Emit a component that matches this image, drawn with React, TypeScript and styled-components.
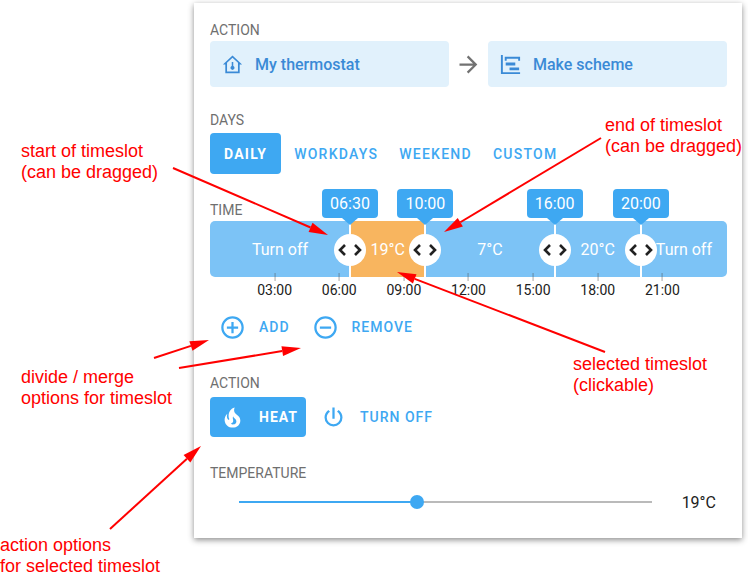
import React, { useState } from "react";
import styled, { createGlobalStyle, css } from "styled-components";

const GlobalStyle = createGlobalStyle`
  *, *::before, *::after { box-sizing: border-box; }
  body { margin: 0; background: #fff; font-family: Roboto, "Open Sans", sans-serif; color: #212121; }
  button { font-family: inherit; border: 0; cursor: pointer; background: none; }
`;

const BLUE = "#3ea8f2";

const Page = styled.main`
  position: relative;
  padding: 3px 6px 34px 194px;
`;

const Card = styled.section`
  padding: 17px 15px 16px 16px;
  background: #fff;
  box-shadow: 0 2px 6px rgba(0, 0, 0, 0.45);
`;

const Section = styled.section<{ $before?: number }>`
  margin-top: ${(p) => p.$before ?? 26}px;
`;

const Label = styled.h2<{ $after?: number }>`
  margin: 0 0 ${(p) => p.$after ?? 1}px;
  font-size: 14px;
  font-weight: 400;
  line-height: 20px;
  color: #6f6f6f;
`;

const ActionRow = styled.div`
  display: flex;
  align-items: center;
`;

const ActionBox = styled.button`
  flex: 1;
  display: flex;
  align-items: center;
  gap: 11px;
  height: 46px;
  padding: 0 11px;
  border-radius: 4px;
  background: #e1f1fc;
  color: #3a8ad6;
  font-size: 16px;
  font-weight: 500;
`;

const ArrowCell = styled.div`
  display: flex;
  justify-content: center;
  width: 39px;
  color: #727272;
`;

const ButtonRow = styled.div`
  display: flex;
  gap: 5px;
`;

const activeStyle = css`
  background: ${BLUE};
  color: #fff;
  font-weight: 700;
`;

const DayButton = styled.button<{ $active: boolean }>`
  height: 41px;
  padding: 0 ${(p) => (p.$active ? 14 : 8)}px;
  border-radius: 4px;
  font-size: 14px;
  font-weight: 500;
  letter-spacing: 1.25px;
  color: ${BLUE};
  ${(p) => p.$active && activeStyle}
`;

const IconButton = styled.button<{ $active?: boolean }>`
  display: flex;
  align-items: center;
  gap: 13px;
  height: 40px;
  padding: 0 8px 0 9px;
  border-radius: 4px;
  font-size: 14px;
  font-weight: 500;
  letter-spacing: 1px;
  color: ${BLUE};
  ${(p) => p.$active && activeStyle}
`;

const Timeline = styled.div`
  position: relative;
  padding-bottom: 30px;
`;

const SlotBar = styled.div`
  display: flex;
  height: 56px;
  border-radius: 5px;
  overflow: hidden;
`;

const Slot = styled.button<{ $hours: number; $selected: boolean }>`
  flex: ${(p) => p.$hours} 1 0;
  min-width: 0;
  padding: 0;
  background: ${(p) => (p.$selected ? "#f8b55f" : "#7cc3f6")};
  color: #fff;
  font-size: 16px;
  white-space: nowrap;
`;

const Hour = styled.span<{ $at: number }>`
  position: absolute;
  top: 52px;
  left: ${(p) => (p.$at / 24) * 100}%;
  display: flex;
  flex-direction: column;
  align-items: center;
  transform: translateX(-50%);
  font-size: 14px;
  line-height: 18px;

  &::before {
    content: "";
    width: 1px;
    height: 8px;
    background: rgba(80, 80, 80, 0.5);
  }
`;

const Marker = styled.div<{ $at: number }>`
  position: absolute;
  top: -32px;
  left: ${(p) => (p.$at / 24) * 100}%;
  display: flex;
  flex-direction: column;
  align-items: center;
  transform: translateX(-50%);

  &::before {
    content: "";
    position: absolute;
    top: 32px;
    width: 2px;
    height: 56px;
    background: #fff;
  }
`;

const TimeTip = styled.span`
  position: relative;
  width: 56px;
  border-radius: 4px;
  background: ${BLUE};
  color: #fff;
  font-size: 16px;
  line-height: 29px;
  text-align: center;

  &::after {
    content: "";
    position: absolute;
    top: 29px;
    left: 20px;
    border: 8px solid transparent;
    border-top: 7px solid ${BLUE};
    border-bottom: 0;
  }
`;

const Handle = styled.button`
  position: relative;
  width: 32px;
  height: 32px;
  margin-top: 16px;
  padding: 0;
  border-radius: 50%;
  background: #fff;
  color: #212121;

  svg { display: block; }
`;

const SliderRow = styled.div`
  display: flex;
  align-items: center;
  gap: 30px;
  padding: 0 11px 0 29px;
  height: 38px;
  margin-bottom: 1px;
  font-size: 16px;
`;

const Slider = styled.input<{ $fill: number }>`
  appearance: none;
  flex: 1;
  min-width: 0;
  height: 20px;
  margin: 0;
  background: linear-gradient(${BLUE}, ${BLUE}) 0 50% / ${(p) => p.$fill}% 2px no-repeat,
    linear-gradient(#bababa, #bababa) 0 50% / 100% 2px no-repeat;

  &::-webkit-slider-thumb {
    appearance: none;
    width: 14px;
    height: 14px;
    border-radius: 50%;
    background: ${BLUE};
  }
`;

const Note = styled.p<{ $x: number; $y: number }>`
  position: absolute;
  left: ${(p) => p.$x}px;
  top: ${(p) => p.$y}px;
  margin: 0;
  font: 18px/21px "Liberation Sans", Arial, sans-serif;
  color: #f00;
  white-space: pre;
  pointer-events: none;
`;

const Arrows = styled.svg`
  position: absolute;
  top: 0;
  left: 0;
  pointer-events: none;
`;

const icons = {
  house:
    "M12 2.500L2 12H4.500V21H19.500V12H22L12 2.500M6.300 19.300V10.300L12 4.900L17.700 10.300V19.300H6.300M11.200 9.500H12.800V13.600A2.100 2.100 0 1 1 11.200 13.600Z",
  gantt: "M2,2H4V20H22V22H2V2M7,10H17V13H7V10M11,15H21V18H11V15M6,4H22V8H20V6H8V8H6V4Z",
  arrow: "M4,11V13H16L10.5,18.5L11.92,19.92L19.84,12L11.92,4.08L10.5,5.5L16,11H4Z",
  plus: "M12,20C7.59,20 4,16.41 4,12C4,7.59 7.59,4 12,4C16.41,4 20,7.59 20,12C20,16.41 16.41,20 12,20M12,2A10,10 0 0,0 2,12A10,10 0 0,0 12,22A10,10 0 0,0 22,12A10,10 0 0,0 12,2M13,7H11V11H7V13H11V17H13V13H17V11H13V7Z",
  minus:
    "M12,20C7.59,20 4,16.41 4,12C4,7.59 7.59,4 12,4C16.41,4 20,7.59 20,12C20,16.41 16.41,20 12,20M12,2A10,10 0 0,0 2,12A10,10 0 0,0 12,22A10,10 0 0,0 22,12A10,10 0 0,0 12,2M7,13H17V11H7V13Z",
  power:
    "M16.56,5.44L15.11,6.89C16.84,7.94 18,9.83 18,12A6,6 0 0,1 12,18A6,6 0 0,1 6,12C6,9.83 7.16,7.94 8.88,6.88L7.44,5.44C5.36,6.88 4,9.28 4,12A8,8 0 0,0 12,20A8,8 0 0,0 20,12C20,9.28 18.64,6.88 16.56,5.44M13,3H11V13H13Z",
  fire: "M17.66 11.2C17.43 10.9 17.15 10.64 16.89 10.38C16.22 9.78 15.46 9.35 14.82 8.72C13.33 7.26 13 4.85 13.95 3C13 3.23 12.17 3.75 11.46 4.32C8.87 6.4 7.85 10.07 9.07 13.22C9.11 13.32 9.15 13.42 9.15 13.55C9.15 13.77 9 13.97 8.8 14.05C8.57 14.15 8.33 14.09 8.14 13.93C8.08 13.88 8.04 13.83 8 13.76C6.87 12.33 6.69 10.28 7.45 8.64C5.78 10 4.87 12.3 5 14.47C5.06 14.97 5.12 15.47 5.29 15.97C5.43 16.57 5.7 17.17 6 17.7C7.08 19.43 8.95 20.67 10.96 20.92C13.1 21.19 15.39 20.8 17.03 19.32C18.86 17.66 19.5 15 18.56 12.72L18.43 12.46C18.22 12 17.66 11.2 17.66 11.2M14.5 17.5C14.22 17.74 13.76 18 13.4 18.1C12.28 18.5 11.16 17.94 10.5 17.28C11.69 17 12.4 16.12 12.61 15.23C12.78 14.43 12.46 13.77 12.33 13C12.21 12.26 12.23 11.63 12.5 10.94C12.69 11.32 12.89 11.7 13.13 12C13.9 13 15.11 13.44 15.37 14.8C15.41 14.94 15.43 15.08 15.43 15.23C15.46 16.05 15.1 16.95 14.5 17.5Z",
};

function Icon({ name, size = 27 }: { name: keyof typeof icons; size?: number }) {
  return (
    <svg width={size} height={size} viewBox="0 0 24 24" fill="currentColor" aria-hidden="true">
      <path d={icons[name]} fillRule={name === "house" ? "evenodd" : "nonzero"} />
    </svg>
  );
}

const days = ["DAILY", "WORKDAYS", "WEEKEND", "CUSTOM"];

const slots = [
  { hours: 6.5, text: "Turn off" },
  { hours: 3.5, text: "19°C" },
  { hours: 6, text: "7°C" },
  { hours: 4, text: "20°C" },
  { hours: 4, text: "Turn off" },
];

const markers = [
  { at: 6.5, text: "06:30" },
  { at: 10, text: "10:00" },
  { at: 16, text: "16:00" },
  { at: 20, text: "20:00" },
];

const hours = [3, 6, 9, 12, 15, 18, 21];

const notes = [
  { x: 21, y: 141, text: "start of timeslot\n(can be dragged)" },
  { x: 605, y: 115, text: "end of timeslot\n(can be dragged)" },
  { x: 573, y: 354, text: "selected timeslot\n(clickable)" },
  { x: 21, y: 367, text: "divide / merge\noptions for timeslot" },
  { x: 0, y: 535, text: "action options\nfor selected timeslot" },
];

const arrows = [
  [173, 168, 328, 235],
  [601, 138, 444, 232],
  [605, 352, 397, 272],
  [154, 358, 209, 340],
  [179, 368, 301, 348],
  [110, 529, 201, 446],
];

function Arrow({ points: [x1, y1, x2, y2] }: { points: number[] }) {
  const len = Math.hypot(x2 - x1, y2 - y1);
  const ux = (x2 - x1) / len;
  const uy = (y2 - y1) / len;
  const bx = x2 - ux * 19;
  const by = y2 - uy * 19;
  return (
    <g>
      <line x1={x1} y1={y1} x2={bx} y2={by} stroke="#f00" strokeWidth="2" />
      <polygon
        fill="#f00"
        points={`${x2},${y2} ${bx - uy * 5},${by + ux * 5} ${bx + uy * 5},${by - ux * 5}`}
      />
    </g>
  );
}

export default function App() {
  const [day, setDay] = useState("DAILY");
  const [slot, setSlot] = useState(1);
  const [heat, setHeat] = useState(true);
  const [temp, setTemp] = useState(19);

  return (
    <Page>
      <GlobalStyle />
      <Card>
        <Section $before={0}>
          <Label>ACTION</Label>
          <ActionRow>
            <ActionBox>
              <Icon name="house" size={23} />
              My thermostat
            </ActionBox>
            <ArrowCell>
              <Icon name="arrow" />
            </ArrowCell>
            <ActionBox>
              <Icon name="gantt" size={23} />
              Make scheme
            </ActionBox>
          </ActionRow>
        </Section>

        <Section $before={23}>
          <Label $after={3}>DAYS</Label>
          <ButtonRow>
            {days.map((d) => (
              <DayButton key={d} $active={d === day} onClick={() => setDay(d)}>
                {d}
              </DayButton>
            ))}
          </ButtonRow>
        </Section>

        <Section>
          <Label>TIME</Label>
          <Timeline>
            <SlotBar>
              {slots.map((s, i) => (
                <Slot key={i} $hours={s.hours} $selected={i === slot} onClick={() => setSlot(i)}>
                  {s.text}
                </Slot>
              ))}
            </SlotBar>
            {hours.map((h) => (
              <Hour key={h} $at={h}>
                {`${String(h).padStart(2, "0")}:00`}
              </Hour>
            ))}
            {markers.map((m) => (
              <Marker key={m.at} $at={m.at}>
                <TimeTip>{m.text}</TimeTip>
                <Handle aria-label={`Drag ${m.text}`}>
                  <svg width="32" height="32" viewBox="0 0 32 32" fill="none" stroke="currentColor" strokeWidth="2.6">
                    <path d="M11 11L6 16L11 21M21 11L26 16L21 21" />
                  </svg>
                </Handle>
              </Marker>
            ))}
          </Timeline>
          <ButtonRow>
            <IconButton>
              <Icon name="plus" />
              ADD
            </IconButton>
            <IconButton>
              <Icon name="minus" />
              REMOVE
            </IconButton>
          </ButtonRow>
        </Section>

        <Section>
          <Label $after={4}>ACTION</Label>
          <ButtonRow>
            <IconButton $active={heat} onClick={() => setHeat(true)}>
              <Icon name="fire" />
              HEAT
            </IconButton>
            <IconButton $active={!heat} onClick={() => setHeat(false)}>
              <Icon name="power" />
              TURN OFF
            </IconButton>
          </ButtonRow>
        </Section>

        <Section>
          <Label as="label" htmlFor="temperature">
            TEMPERATURE
          </Label>
          <SliderRow>
            <Slider
              id="temperature"
              type="range"
              min={7}
              max={35}
              value={temp}
              $fill={((temp - 7) / 28) * 100}
              onChange={(e) => setTemp(Number(e.target.value))}
            />
            <output htmlFor="temperature">{temp}°C</output>
          </SliderRow>
        </Section>
      </Card>

      {notes.map((n) => (
        <Note key={n.text} $x={n.x} $y={n.y}>
          {n.text}
        </Note>
      ))}
      <Arrows width="748" height="572" aria-hidden="true">
        {arrows.map((a, i) => (
          <Arrow key={i} points={a} />
        ))}
      </Arrows>
    </Page>
  );
}
